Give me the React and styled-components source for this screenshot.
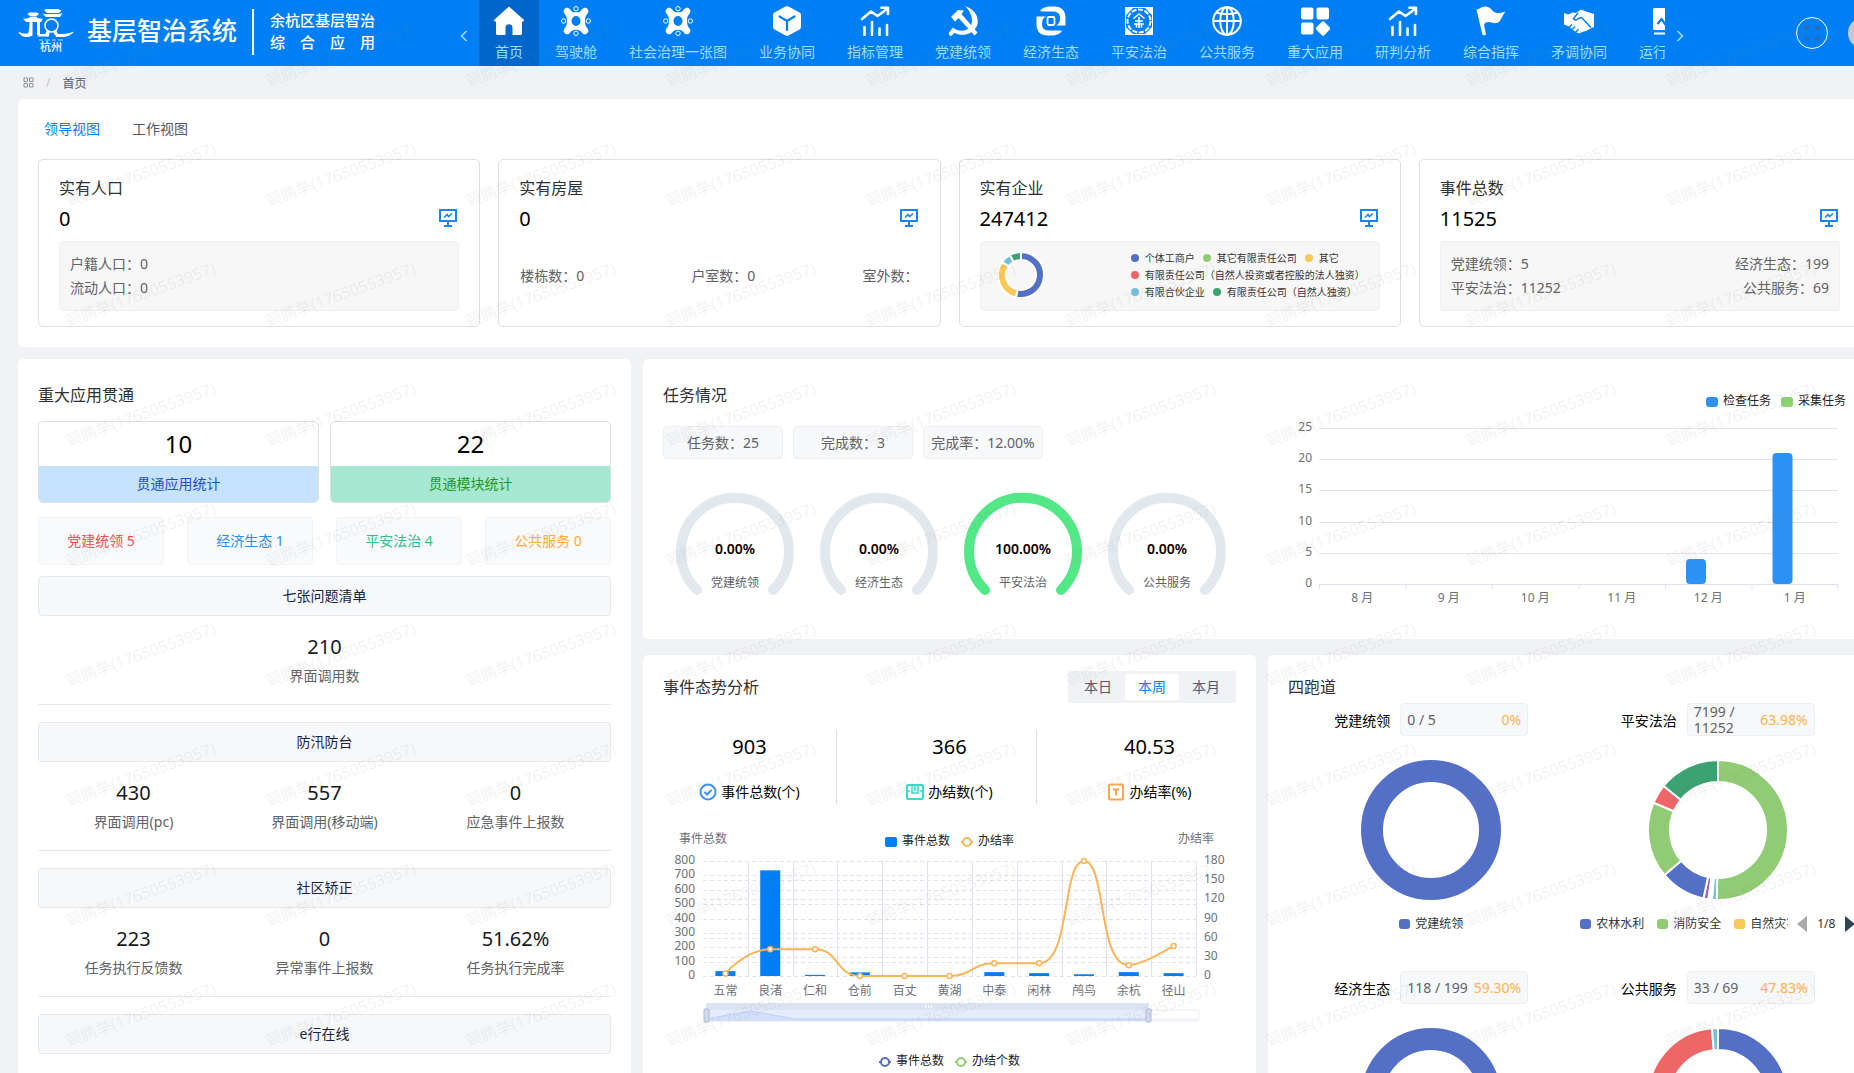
import React, { useState } from "react";
import styled, { createGlobalStyle } from "styled-components";

const navItems = [
  { icon: "home", label: "首页" },
  { icon: "gear", label: "驾驶舱" },
  { icon: "gear", label: "社会治理一张图" },
  { icon: "cube", label: "业务协同" },
  { icon: "trend", label: "指标管理" },
  { icon: "party", label: "党建统领" },
  { icon: "swirl", label: "经济生态" },
  { icon: "emblem", label: "平安法治" },
  { icon: "globe", label: "公共服务" },
  { icon: "apps", label: "重大应用" },
  { icon: "trend", label: "研判分析" },
  { icon: "flag", label: "综合指挥" },
  { icon: "shake", label: "矛调协同" },
  { icon: "board", label: "运行监测" },
];

const companyLegend = [
  ["#5470c6", "个体工商户"],
  ["#91cc75", "其它有限责任公司"],
  ["#fac858", "其它"],
  ["#ee6666", "有限责任公司（自然人投资或者控股的法人独资）"],
  ["#73c0de", "有限合伙企业"],
  ["#3ba272", "有限责任公司（自然人独资）"],
];

const appChips = [
  { label: "党建统领 5", color: "#f05050" },
  { label: "经济生态 1", color: "#2d8cf0" },
  { label: "平安法治 4", color: "#2fc08a" },
  { label: "公共服务 0", color: "#ffa940" },
];

const appSections = [
  { title: "七张问题清单", items: [["210", "界面调用数"]] },
  {
    title: "防汛防台",
    items: [
      ["430", "界面调用(pc)"],
      ["557", "界面调用(移动端)"],
      ["0", "应急事件上报数"],
    ],
  },
  {
    title: "社区矫正",
    items: [
      ["223", "任务执行反馈数"],
      ["0", "异常事件上报数"],
      ["51.62%", "任务执行完成率"],
    ],
  },
  { title: "e行在线", items: [] },
];

const gauges = [
  { value: 0, label: "党建统领" },
  { value: 0, label: "经济生态" },
  { value: 100, label: "平安法治" },
  { value: 0, label: "公共服务" },
];

const months = [
  ["8 月", 0],
  ["9 月", 0],
  ["10 月", 0],
  ["11 月", 0],
  ["12 月", 4],
  ["1 月", 21],
];

const towns = [
  ["五常", 34, 4],
  ["良渚", 735, 42],
  ["仁和", 8, 42],
  ["仓前", 25, 0],
  ["百丈", 0, 0],
  ["黄湖", 0, 0],
  ["中泰", 27, 20],
  ["闲林", 20, 20],
  ["鸬鸟", 12, 180],
  ["余杭", 27, 17],
  ["径山", 20, 47],
];

const lanes = [
  {
    name: "党建统领",
    count: "0 / 5",
    rate: "0%",
    slices: [[360, "#5470c6"]],
    legend: [["#5470c6", "党建统领"]],
  },
  {
    name: "平安法治",
    count: "7199 / 11252",
    rate: "63.98%",
    slices: [
      [181, "#91cc75"],
      [4, "#73c0de"],
      [3, "#ffffff"],
      [4, "#9a60b4"],
      [38, "#5470c6"],
      [63, "#91cc75"],
      [16, "#ee6666"],
      [51, "#3ba272"],
    ],
    legend: [
      ["#5470c6", "农林水利"],
      ["#91cc75", "消防安全"],
      ["#fac858", "自然灾害"],
    ],
    paged: true,
  },
  {
    name: "经济生态",
    count: "118 / 199",
    rate: "59.30%",
    slices: [[360, "#5470c6"]],
    legend: [["#5470c6", "经济生态"]],
  },
  {
    name: "公共服务",
    count: "33 / 69",
    rate: "47.83%",
    slices: [
      [172, "#5470c6"],
      [183, "#ee6666"],
      [5, "#73c0de"],
    ],
    legend: [["#5470c6", "公共服务"]],
  },
];

const NavIcon = ({ name }) => (
  <svg width="30" height="30" viewBox="0 0 30 30" fill="currentColor">
    {name === "home" && (
      <path d="M15 0.500L29.500 13.500C30.500 14.500 30 15.500 28.800 15.500H28V27C28 28.500 27.500 29 26 29H18.500V21.500C18.500 17 11.500 17 11.500 21.500V29H4C2.500 29 2 28.500 2 27V15.500H1.200C0 15.500 -0.500 14.500 0.500 13.500Z" />
    )}
    {name === "gear" && (
      <>
        <path
          fillRule="evenodd"
          d="M3.500 3C5 1 7.500 1.300 9 3.200C10.500 5.500 12 6.300 15 6.300C18 6.300 19.500 5.500 21 3.200C22.500 1.300 25 1 26.500 3C28 4.800 27.500 6.800 26 8.200C24.500 10 24 12 24 15C24 18 24.500 20 26 21.800C27.500 23.200 28 25.200 26.500 27C25 29 22.500 28.700 21 26.800C19.500 24.500 18 23.700 15 23.700C12 23.700 10.500 24.500 9 26.800C7.500 28.700 5 29 3.500 27C2 25.200 2.500 23.200 4 21.800C5.500 20 6 18 6 15C6 12 5.500 10 4 8.200C2.500 6.800 2 4.800 3.500 3ZM15 10A4.500 5 0 1 0 15 20A4.500 5 0 1 0 15 10Z"
        />
        <g fill="none" stroke="currentColor" strokeWidth="1">
          <circle cx="15" cy="2.700" r="2.200" />
          <circle cx="15" cy="27.300" r="2.200" />
          <circle cx="2.700" cy="15" r="2.200" />
          <circle cx="27.300" cy="15" r="2.200" />
        </g>
      </>
    )}
    {name === "cube" && (
      <>
        <path d="M13.500 0.500Q15 -0.200 16.500 0.500L27.500 6.500Q29 7.300 29 9V21Q29 22.700 27.500 23.500L16.500 29.500Q15 30.200 13.500 29.500L2.500 23.500Q1 22.700 1 21V9Q1 7.300 2.500 6.500Z" />
        <path
          d="M7.500 10.500L15 15L22.500 10.500M15 15V24"
          fill="none"
          stroke="#007ff5"
          strokeWidth="2.200"
          strokeLinecap="round"
        />
      </>
    )}
    {name === "trend" && (
      <g
        fill="none"
        stroke="currentColor"
        strokeWidth="2.600"
        strokeLinecap="round"
        strokeLinejoin="round"
      >
        <path d="M2 13L11 5.500L17.500 10L27 3M21.500 1.800H28V8" />
        <path d="M4.500 21V29M12 16V29M19.500 22.500V29M27 19V29" />
      </g>
    )}
    {name === "party" && (
      <>
        <path d="M17 0C26 3 31 10 29.500 18C27.500 26 19 30 11 28.500C9 28 7.500 27.500 6.500 26.800L4 29.500C2.500 30.500 0 28.500 1 26.500L5 21.500C10 26 18 26 22 21C26 15 24 7 17 0Z" />
        <path d="M3 11L10 4L16 4.500L13.500 8L29.500 26.500L26.500 29.500L10.500 12L7 15.500Z" />
      </>
    )}
    {name === "swirl" && (
      <>
        <path d="M4 5C8 0 13 0.500 18 0.500C26 0.500 29.500 5 29.500 12V19.500H20C23 18 24 16 24 12C24 7 21 5.500 16 5.500H9C7 5.500 5 5.500 4 5Z" />
        <path d="M26 25C22 30 17 29.500 12 29.500C4 29.500 0.500 25 0.500 18V10.500H10C7 12 6 14 6 18C6 23 9 24.500 14 24.500H21C23 24.500 25 24.500 26 25Z" />
        <path
          d="M11.500 12.500Q11.500 11 13 11H17Q18.500 11 18.500 12.500V17.500Q18.500 19 17 19H13Q11.500 19 11.500 17.500Z"
          fill="none"
          stroke="currentColor"
          strokeWidth="1.800"
        />
      </>
    )}
    {name === "emblem" && (
      <>
        <path d="M1 1H10L1 10ZM29 1V10L20 1ZM1 29V20L10 29ZM29 29H20L29 20Z" />
        <rect x="1.500" y="1.500" width="27" height="27" fill="none" stroke="currentColor" strokeWidth="1" />
        <circle cx="15" cy="15" r="11.500" fill="none" stroke="currentColor" strokeWidth="2" strokeDasharray="5 1.600" />
        <path
          d="M9.500 12.500L15 8L20.500 12.500M11 15H19M15 11V22M10 18H20M12.500 18V21.500M17.500 18V21.500"
          fill="none"
          stroke="currentColor"
          strokeWidth="1.600"
        />
      </>
    )}
    {name === "globe" && (
      <g fill="none" stroke="currentColor" strokeWidth="2">
        <circle cx="15" cy="15" r="13.800" />
        <ellipse cx="15" cy="15" rx="6.800" ry="13.800" />
        <path d="M15 1V29M1 15H29M4 6.500Q15 10 26 6.500" />
      </g>
    )}
    {name === "apps" && (
      <>
        <rect x="1" y="1.500" width="12.500" height="12" rx="2" />
        <rect x="16.500" y="1.500" width="12.500" height="12" rx="2" />
        <rect x="1" y="16.500" width="12.500" height="12" rx="2" />
        <path d="M22 15.500Q23 14.800 24 15.500L29.800 21.500Q30.500 22.500 29.800 23.500L24 29.500Q23 30.200 22 29.500L16.200 23.500Q15.500 22.500 16.200 21.500Z" />
      </>
    )}
    {name === "flag" && (
      <path d="M0.500 3.500C4 3 6 0 10 0.500C15 1 16 6 21 7C24 7.500 27 6.500 29.500 5.500C27 8 26 12 23.500 15.500C20 19 16 16 12.500 16C9.500 16 8.500 17.500 8 19L10 28.500Q8.500 29.800 6.500 29Z" />
    )}
    {name === "shake" && (
      <>
        <path d="M0 7L4 8.500L9 6.500L12 7L17 3.500L22 5.500L30 8V21L26.500 22.500L22 25L18 26L15.500 27.500L12.500 26.500L4 20L0 18.500Z" />
        <path
          d="M14 7L9.500 12.500Q11.500 15.500 14.500 12.500L17.500 11.500L27 21.500"
          fill="none"
          stroke="#007ff5"
          strokeWidth="1.500"
        />
        <path
          d="M4.500 22L8 18.500M7.500 24.500L11 20.500M11 27L14.500 23"
          stroke="#007ff5"
          strokeWidth="1.200"
        />
      </>
    )}
    {name === "board" && (
      <>
        <rect x="1" y="2" width="28" height="22" rx="1.500" />
        <path d="M5.500 18L9.500 13L13 18L17 11L21 16" fill="none" stroke="#007ff5" strokeWidth="2.200" />
        <rect x="2" y="26.500" width="26" height="2" />
      </>
    )}
  </svg>
);

const Logo = () => (
  <svg width="56" height="46" viewBox="0 0 56 46" fill="#fff">
    <path d="M26 1L28.500 0H40L43.500 1.500L41 4H29ZM24.500 4.500L27 5H41L44.500 4L42 8H28Z" />
    <path d="M11 3.500H19L21 5L18.500 7H12L9.500 5.500ZM5 9.500C9 10 11 9 13 7.500H18C20 9.500 22 10 25 9.500L23 13H8Z" />
    <path d="M11.500 12H14.500V26.500C12 28 9 28 9 28C10.500 24 11.500 20 11.500 12ZM19 12H22V26H19Z" />
    <circle cx="33.500" cy="16.500" r="6.500" fill="none" stroke="#fff" strokeWidth="1.500" />
    <path d="M29 21L27 26H31L32 22ZM38 21L40.500 26H36.500L35 22Z" />
    <path d="M0 22.500C4 25 8 24.500 11 24.500L9 28C4 28 2 26 0 22.500ZM22 25H31V27.500H19ZM37 25H44C49 25 52 24 56 22.500C53 26.500 49 28 43 28H38Z" />
    <path d="M21 31H25M27 31H32M34 31H38M40 31H45" stroke="#fff" strokeWidth="1" opacity="0.700" />
    <text x="22" y="42" fontSize="11" fontWeight="500">
      杭州
    </text>
  </svg>
);

const MonitorIcon = () => (
  <svg width="20" height="20" viewBox="0 0 20 20" fill="none" stroke="#1684fc" strokeWidth="2">
    <path d="M1 2H17V13H1ZM9 13V18M5 18H13" />
    <path d="M5 9.500L8 6.500L9.500 8.500L13 5.500" strokeWidth="1.600" />
  </svg>
);

const polar = (c, r, deg) => {
  const a = ((deg - 90) * Math.PI) / 180;
  return `${c + r * Math.cos(a)} ${c + r * Math.sin(a)}`;
};

const Donut = ({ size, hole, slices, gap }) => {
  const c = size / 2;
  if (slices.length === 1) {
    return (
      <svg width={size} height={size}>
        <circle cx={c} cy={c} r={(c + hole) / 2} fill="none" stroke={slices[0][1]} strokeWidth={c - hole} />
      </svg>
    );
  }
  let start = 0;
  return (
    <svg width={size} height={size}>
      {slices.map(([deg, color], i) => {
        const from = start;
        const to = start + deg;
        start = to;
        const large = deg > 180 ? 1 : 0;
        return (
          <path
            key={i}
            fill={color}
            stroke="#fff"
            strokeWidth={gap}
            d={`M${polar(c, c, from)}A${c} ${c} 0 ${large} 1 ${polar(c, c, to)}L${polar(c, hole, to)}A${hole} ${hole} 0 ${large} 0 ${polar(c, hole, from)}Z`}
          />
        );
      })}
    </svg>
  );
};

const Gauge = ({ value, label }) => (
  <svg width="144" height="136" textAnchor="middle">
    <path
      d="M34 107A54 54 0 1 1 110 107"
      fill="none"
      stroke={value ? "#52e787" : "#e1e8ee"}
      strokeWidth="10"
      strokeLinecap="round"
    />
    <text x="72" y="71" fontSize="14" fontWeight="600" fill="#000">
      {value.toFixed(2)}%
    </text>
    <text x="72" y="104" fontSize="12" fill="#606266">
      {label}
    </text>
  </svg>
);

const TaskChart = () => {
  const x0 = 57;
  const y0 = 205;
  const step = 86.5;
  const y = (v) => y0 - v * 6.24;
  return (
    <svg width="600" height="240" fontSize="12" fill="#6e7079">
      <rect x="444" y="18" width="12" height="10" rx="3" fill="#2d92f5" />
      <text x="461" y="26" fill="#222">检查任务</text>
      <rect x="519" y="18" width="12" height="10" rx="3" fill="#8bd46e" />
      <text x="536" y="26" fill="#222">采集任务</text>
      {[0, 5, 10, 15, 20, 25].map((v) => (
        <g key={v}>
          <path d={`M${x0} ${Math.round(y(v)) + 0.5}H${x0 + step * 6}`} stroke="#e0e3ee" />
          <text x="50" y={y(v) + 3} textAnchor="end">
            {v}
          </text>
        </g>
      ))}
      {months.map(([name, v], i) => (
        <g key={name}>
          <path d={`M${x0 + step * i + 0.5} ${y0}v5`} stroke="#e0e3ee" />
          {v > 0 && (
            <rect x={x0 + step * i + 21} y={y(v)} width="20" height={y0 - y(v)} rx="4" fill="#2d92f5" />
          )}
          <text x={x0 + step * (i + 0.5)} y="223" textAnchor="middle">
            {name}
          </text>
        </g>
      ))}
      <path d={`M${x0 + step * 6 - 0.5} ${y0}v5`} stroke="#e0e3ee" />
    </svg>
  );
};

const clamp = (v, a, b) => Math.max(Math.min(a, b), Math.min(Math.max(a, b), v));

// smooth line through the points, control points stay inside the neighbours' box
const smoothPath = (pts) => {
  const cps = pts.map((p, i) => {
    const prev = pts[i - 1];
    const next = pts[i + 1];
    if (!prev || !next) return [p, p];
    const lp = Math.hypot(p[0] - prev[0], p[1] - prev[1]);
    const ln = Math.hypot(p[0] - next[0], p[1] - next[1]);
    const r = ln / (lp + ln);
    const out = [0, 1].map((k) => clamp(p[k] + (next[k] - prev[k]) * 0.5 * r, p[k], next[k]));
    const inn = [0, 1].map((k) => clamp(p[k] - ((out[k] - p[k]) * lp) / ln, p[k], prev[k]));
    return [inn, [0, 1].map((k) => p[k] + ((p[k] - inn[k]) * ln) / lp)];
  });
  return pts
    .map((p, i) => (i === 0 ? `M${p}` : `C${cps[i - 1][1]} ${cps[i][0]} ${p}`))
    .join("");
};

const EventChart = () => {
  const x0 = 40;
  const y0 = 156;
  const h = 115;
  const step = 493 / 11;
  const pts = towns.map(([, , r], i) => [x0 + step * (i + 0.5), y0 - (r / 180) * h]);
  return (
    <svg width="573" height="262" fontSize="12" fill="#6e7079">
      <text x="40" y="23" textAnchor="middle">事件总数</text>
      <text x="533" y="23" textAnchor="middle">办结率</text>
      <rect x="222" y="17" width="12" height="10" rx="2" fill="#007ff5" />
      <text x="239" y="25" fill="#222">事件总数</text>
      <path d="M298 22h12" stroke="#f8b55a" strokeWidth="2" />
      <circle cx="304" cy="22" r="4" fill="#fff" stroke="#f8b55a" strokeWidth="2" />
      <text x="315" y="25" fill="#222">办结率</text>
      {[0, 1, 2, 3, 4, 5, 6, 7, 8].map((n) => {
        const y = y0 - (n / 8) * h;
        return (
          <g key={n}>
            <path d={`M${x0} ${Math.round(y) + 0.5}h493`} stroke="#e0e3ee" strokeDasharray="4 3" />
            <text x="32" y={y + 3} textAnchor="end">{n * 100}</text>
          </g>
        );
      })}
      {[0, 1, 2, 3, 4, 5, 6].map((n) => {
        const y = y0 - (n / 6) * h;
        return (
          <g key={n}>
            <path d={`M${x0} ${Math.round(y) + 0.5}h493`} stroke="#e0e3ee" strokeDasharray="4 3" />
            <text x="541" y={y + 3}>{n * 30}</text>
          </g>
        );
      })}
      {towns.map(([name, total], i) => (
        <g key={name}>
          <path d={`M${Math.round(x0 + step * (i + 1)) + 0.5} ${y0 - h}v${h}`} stroke="#e0e3ee" />
          <rect
            x={x0 + step * (i + 0.5) - 10}
            y={y0 - (total / 800) * h}
            width="20"
            height={(total / 800) * h}
            fill="#007ff5"
          />
          <text x={x0 + step * (i + 0.5)} y="175" textAnchor="middle">{name}</text>
        </g>
      ))}
      <path d={smoothPath(pts)} fill="none" stroke="#f8b55a" strokeWidth="2" />
      {pts.map(([x, y]) => (
        <circle key={x} cx={x} cy={y} r="2.500" fill="#fff" stroke="#f8b55a" strokeWidth="1.500" />
      ))}
      <rect x="43" y="190" width="493" height="11" rx="3" fill="#fff" stroke="#e6eaf5" />
      <path d="M43 199H536" stroke="#e6eaf5" />
      <rect x="43" y="183" width="443" height="7" fill="#dbe4f2" />
      <rect x="43" y="190" width="443" height="11" fill="#e5edfd" />
      <path d="M43 199L88 191L132 199H486V201H43Z" fill="#d3e0fb" />
      <path d="M43 199L88 191L132 199H486" fill="none" stroke="#bccff8" />
      <path d="M262.500 185v3M265.500 185v3M268.500 185v3" stroke="#fff" />
      <rect x="41" y="189" width="5" height="13" rx="1" fill="#d2dbee" stroke="#acb8d1" />
      <rect x="483" y="189" width="5" height="13" rx="1" fill="#d2dbee" stroke="#acb8d1" />
      <path d="M216 242h12" stroke="#5470c6" strokeWidth="2" />
      <circle cx="222" cy="242" r="4" fill="#fff" stroke="#5470c6" strokeWidth="2" />
      <text x="233" y="245" fill="#222">事件总数</text>
      <path d="M292 242h12" stroke="#91cc75" strokeWidth="2" />
      <circle cx="298" cy="242" r="4" fill="#fff" stroke="#91cc75" strokeWidth="2" />
      <text x="309" y="245" fill="#222">办结个数</text>
    </svg>
  );
};

const Watermark = () => (
  <WatermarkLayer aria-hidden="true">
    <defs>
      <pattern id="wm" x="60" y="10" width="200" height="120" patternUnits="userSpaceOnUse">
        <text x="8" y="77" fontSize="16" fill="#808080" fillOpacity="0.100" transform="rotate(-20 8 77)">
          顿鹏举(17650553957)
        </text>
      </pattern>
    </defs>
    <rect x="60" width="100%" height="100%" fill="url(#wm)" />
  </WatermarkLayer>
);

const App = () => {
  const [view, setView] = useState("领导视图");
  const [range, setRange] = useState("本周");

  return (
    <Page>
      <GlobalStyle />
      <Content>
        <Header>
          <Brand>
            <Logo />
            <BrandName>基层智治系统</BrandName>
            <BrandSub>
              <span>余杭区基层智治</span>
              <span>综　合　应　用</span>
            </BrandSub>
          </Brand>
          <ArrowButton aria-label="向左">
            <svg width="8" height="12" fill="none" stroke="currentColor" strokeWidth="1.500">
              <path d="M6.500 1L1.500 6L6.500 11" />
            </svg>
          </ArrowButton>
          <Nav>
            {navItems.map((item, i) => (
              <NavItem href="#" key={item.label} $active={i === 0}>
                <NavIcon name={item.icon} />
                <span>{item.label}</span>
              </NavItem>
            ))}
          </Nav>
          <ArrowButton aria-label="向右">
            <svg width="8" height="12" fill="none" stroke="currentColor" strokeWidth="1.500">
              <path d="M1.500 1L6.500 6L1.500 11" />
            </svg>
          </ArrowButton>
          <HeaderTools>
            <RoundButton aria-label="全屏">
              <svg width="14" height="14" fill="none" stroke="#4a5f7a" strokeWidth="1.500">
                <path d="M4 1H1V4M10 1H13V4M4 13H1V10M10 13H13V10" />
              </svg>
            </RoundButton>
            <Avatar />
          </HeaderTools>
        </Header>

        <Breadcrumb>
          <svg width="11" height="11" fill="none" stroke="#8c939d">
            <path d="M1 1H4.500V4.500H1ZM6.500 1H10V4.500H6.500ZM1 6.500H4.500V10H1ZM6.500 6.500H10V10H6.500Z" />
          </svg>
          <Slash>/</Slash>
          <span>首页</span>
        </Breadcrumb>

        <Main>
          <Overview>
            <Tabs>
              {["领导视图", "工作视图"].map((t) => (
                <Tab key={t} $active={view === t} onClick={() => setView(t)}>
                  {t}
                </Tab>
              ))}
            </Tabs>
            <CardRow>
              <Card>
                <CardTitle>实有人口</CardTitle>
                <CardNumber>
                  0 <MonitorIcon />
                </CardNumber>
                <CardBox>
                  <Lines>
                    <span>户籍人口：0</span>
                    <span>流动人口：0</span>
                  </Lines>
                </CardBox>
              </Card>
              <Card>
                <CardTitle>实有房屋</CardTitle>
                <CardNumber>
                  0 <MonitorIcon />
                </CardNumber>
                <CardBox $plain>
                  <span>楼栋数：0</span>
                  <span>户室数：0</span>
                  <span>室外数：</span>
                </CardBox>
              </Card>
              <Card>
                <CardTitle>实有企业</CardTitle>
                <CardNumber>
                  247412 <MonitorIcon />
                </CardNumber>
                <CardBox $chart>
                  <Donut
                    size={46}
                    hole={15}
                    gap={2}
                    slices={[
                      [193, "#5470c6"],
                      [112, "#fac858"],
                      [26, "#73c0de"],
                      [29, "#3ba272"],
                    ]}
                  />
                  <DotLegend>
                    {companyLegend.map(([color, text]) => (
                      <DotItem key={text} $color={color}>
                        {text}
                      </DotItem>
                    ))}
                  </DotLegend>
                </CardBox>
              </Card>
              <Card>
                <CardTitle>事件总数</CardTitle>
                <CardNumber>
                  11525 <MonitorIcon />
                </CardNumber>
                <CardBox>
                  <Lines>
                    <span>党建统领：5</span>
                    <span>平安法治：11252</span>
                  </Lines>
                  <Lines $end>
                    <span>经济生态：199</span>
                    <span>公共服务：69</span>
                  </Lines>
                </CardBox>
              </Card>
            </CardRow>
          </Overview>

          <Board>
            <AppPanel>
              <PanelTitle>重大应用贯通</PanelTitle>
              <Totals>
                <Total $bg="#c5e2ff" $color="#1e50c8">
                  <strong>10</strong>
                  <span>贯通应用统计</span>
                </Total>
                <Total $bg="#a6e8d1" $color="#1f9a1f">
                  <strong>22</strong>
                  <span>贯通模块统计</span>
                </Total>
              </Totals>
              <AppChips>
                {appChips.map((c) => (
                  <AppChip key={c.label} $color={c.color}>
                    {c.label}
                  </AppChip>
                ))}
              </AppChips>
              {appSections.map((s) => (
                <section key={s.title}>
                  <SectionBar>{s.title}</SectionBar>
                  <SectionStats>
                    {s.items.map(([value, label]) => (
                      <SectionStat key={label}>
                        <strong>{value}</strong>
                        <span>{label}</span>
                      </SectionStat>
                    ))}
                  </SectionStats>
                </section>
              ))}
            </AppPanel>

            <TaskPanel>
              <div>
                <PanelTitle>任务情况</PanelTitle>
                <TaskChips>
                  <TaskChip>任务数：25</TaskChip>
                  <TaskChip>完成数：3</TaskChip>
                  <TaskChip>完成率：12.00%</TaskChip>
                </TaskChips>
                <Gauges>
                  {gauges.map((g) => (
                    <Gauge key={g.label} {...g} />
                  ))}
                </Gauges>
              </div>
              <TaskChart />
            </TaskPanel>

            <EventPanel>
              <PanelHead>
                <PanelTitle>事件态势分析</PanelTitle>
                <Segmented>
                  {["本日", "本周", "本月"].map((r) => (
                    <Segment key={r} $active={range === r} onClick={() => setRange(r)}>
                      {r}
                    </Segment>
                  ))}
                </Segmented>
              </PanelHead>
              <EventStats>
                <EventStat>
                  <strong>903</strong>
                  <span>
                    <svg width="18" height="18" fill="none" stroke="#3d94f6" strokeWidth="2">
                      <circle cx="9" cy="9" r="7.500" />
                      <path d="M5.500 9L8 11.500L12.500 7" />
                    </svg>
                    事件总数(个)
                  </span>
                </EventStat>
                <EventStat>
                  <strong>366</strong>
                  <span>
                    <svg width="18" height="18" fill="none" stroke="#35dccb" strokeWidth="2">
                      <rect x="1" y="2" width="16" height="14" rx="1" />
                      <path d="M6 2V10H12V2M1 8H4M14 8H17M9 2V8" strokeWidth="1.500" />
                    </svg>
                    办结数(个)
                  </span>
                </EventStat>
                <EventStat>
                  <strong>40.53</strong>
                  <span>
                    <svg width="18" height="18" fill="none" stroke="#ffa550" strokeWidth="2">
                      <rect x="2" y="1.500" width="14" height="15" rx="1" />
                      <path d="M6 6.500H12M9 6.500V12.500" />
                    </svg>
                    办结率(%)
                  </span>
                </EventStat>
              </EventStats>
              <EventChart />
            </EventPanel>

            <LanePanel>
              <PanelHead>
                <PanelTitle>四跑道</PanelTitle>
              </PanelHead>
              <LaneGrid>
                {lanes.map((lane) => (
                  <Lane key={lane.name}>
                    <LaneHead>
                      {lane.name}
                      <LaneBox>
                        <span>{lane.count}</span>
                        <em>{lane.rate}</em>
                      </LaneBox>
                    </LaneHead>
                    <Donut size={140} hole={48} gap={2} slices={lane.slices} />
                    <LaneLegend>
                      <LegendItems $clip={lane.paged}>
                        {lane.legend.map(([color, text]) => (
                          <LegendItem key={text} $color={color}>
                            {text}
                          </LegendItem>
                        ))}
                      </LegendItems>
                      {lane.paged && (
                        <Pager>
                          <PageButton aria-label="上一页">
                            <svg width="10" height="16" fill="#aaa">
                              <path d="M10 0V16L0 8Z" />
                            </svg>
                          </PageButton>
                          1/8
                          <PageButton aria-label="下一页">
                            <svg width="10" height="16" fill="#2f4554">
                              <path d="M0 0V16L10 8Z" />
                            </svg>
                          </PageButton>
                        </Pager>
                      )}
                    </LaneLegend>
                  </Lane>
                ))}
              </LaneGrid>
            </LanePanel>
          </Board>
        </Main>
      </Content>
      <Watermark />
    </Page>
  );
};

const GlobalStyle = createGlobalStyle`
  * {
    box-sizing: border-box;
  }
  body {
    margin: 0;
    background: #f1f2f5;
    color: #303133;
    font-family: "Noto Sans", "Noto Sans CJK SC", sans-serif;
    font-size: 14px;
  }
  button {
    padding: 0;
    border: 0;
    background: none;
    color: inherit;
    font: inherit;
    cursor: pointer;
  }
  a {
    color: inherit;
    text-decoration: none;
  }
  svg {
    display: block;
    flex: none;
  }
  strong {
    font-weight: 400;
  }
`;

const Page = styled.div`
  height: 100vh;
  overflow: auto;
  scrollbar-width: none;
`;

const Content = styled.div`
  min-width: 1899px;
`;

const WatermarkLayer = styled.svg`
  position: fixed;
  inset: 0;
  width: 100%;
  height: 100%;
  pointer-events: none;
`;

const Header = styled.header`
  display: flex;
  align-items: center;
  height: 66px;
  background: #007ff5;
  color: #fff;
`;

const Brand = styled.div`
  display: flex;
  align-items: center;
  width: 449px;
  padding: 0 0 3px 18px;
`;

const BrandName = styled.h1`
  margin: 0 15px 0 13px;
  padding-bottom: 4px;
  font-size: 25px;
  font-weight: 500;
  line-height: 36px;
`;

const BrandSub = styled.div`
  display: flex;
  flex-direction: column;
  padding: 0 0 2px 16px;
  border-left: 2px solid #fff;
  font-size: 15px;
  font-weight: 500;
  line-height: 22px;
`;

const ArrowButton = styled.button`
  display: flex;
  align-items: center;
  justify-content: center;
  width: 30px;
  height: 66px;
  padding-top: 6px;
  color: #a6dcff;
`;

const Nav = styled.nav`
  display: flex;
  flex: 1;
  overflow: hidden;
`;

const NavItem = styled.a`
  display: flex;
  flex: none;
  flex-direction: column;
  align-items: center;
  height: 66px;
  padding: 6px 16px 0;
  background: ${({ $active }) => ($active ? "#0066cc" : "transparent")};

  svg {
    margin: 0 -2px;
  }
  span {
    margin-top: auto;
    color: #a0dcff;
    line-height: 28px;
  }
`;

const HeaderTools = styled.div`
  display: flex;
  gap: 20px;
  width: 204px;
  padding-right: 19px;
  justify-content: flex-end;
`;

const RoundButton = styled.button`
  display: flex;
  align-items: center;
  justify-content: center;
  width: 32px;
  height: 32px;
  border: 1px solid #fff;
  border-radius: 50%;
`;

const Avatar = styled.div`
  width: 32px;
  height: 32px;
  border-radius: 50%;
  background: #c4c8ce;
`;

const Breadcrumb = styled.div`
  display: flex;
  align-items: center;
  gap: 12px;
  height: 33px;
  padding-left: 23px;
  color: #515a6e;
  font-size: 12px;
`;

const Slash = styled.span`
  color: #c0c4cc;
`;

const Main = styled.main`
  padding: 0 18px 18px;
`;

const Panel = styled.section`
  border-radius: 5px;
  background: #fff;
`;

const Overview = styled(Panel)`
  padding: 0 20px 20px;
`;

const Tabs = styled.div`
  display: flex;
  gap: 32px;
  height: 60px;
  padding: 0 0 2px 6px;
`;

const Tab = styled.button`
  color: ${({ $active }) => ($active ? "#007ff5" : "#515a6e")};
`;

const CardRow = styled.div`
  display: grid;
  grid-template-columns: repeat(4, 1fr);
  gap: 18px;
`;

const Card = styled.article`
  padding: 16px 20px 15px;
  border: 1px solid #dcdfe3;
  border-radius: 5px;
`;

const CardTitle = styled.h3`
  margin: 0;
  font-size: 16px;
  font-weight: 400;
  line-height: 24px;
`;

const CardNumber = styled.div`
  display: flex;
  align-items: center;
  justify-content: space-between;
  height: 36px;
  margin-bottom: 5px;
  color: #000;
  font-size: 20px;
`;

const CardBox = styled.div`
  display: flex;
  align-items: center;
  justify-content: space-between;
  height: 70px;
  padding: ${({ $plain, $chart }) => ($plain ? "0 1px 2px" : $chart ? "0 12px 2px 17px" : "0 10px")};
  border: ${({ $plain }) => ($plain ? "0" : "1px solid #eeeff1")};
  border-radius: 4px;
  background: ${({ $plain }) => ($plain ? "none" : "#f7f7f7")};
  color: #606266;
`;

const Lines = styled.div`
  display: flex;
  flex-direction: column;
  align-items: ${({ $end }) => ($end ? "flex-end" : "flex-start")};
  line-height: 24px;
`;

const DotLegend = styled.div`
  display: flex;
  flex-wrap: wrap;
  column-gap: 8px;
  width: 236px;
  color: #333;
  font-size: 10px;
  line-height: 17px;
`;

const DotItem = styled.span`
  display: flex;
  align-items: center;
  gap: 6px;
  white-space: nowrap;

  &::before {
    content: "";
    width: 8px;
    height: 8px;
    border-radius: 50%;
    background: ${({ $color }) => $color};
  }
`;

const Board = styled.div`
  display: grid;
  grid-template-columns: repeat(3, 1fr);
  grid-template-rows: 280px auto;
  gap: 16px 12px;
  margin-top: 12px;
`;

const PanelTitle = styled.h2`
  margin: 0;
  font-size: 16px;
  font-weight: 400;
  line-height: 24px;
`;

const AppPanel = styled(Panel)`
  grid-row: span 2;
  padding: 24px 20px;
`;

const Totals = styled.div`
  display: grid;
  grid-template-columns: 1fr 1fr;
  gap: 11px;
  margin-top: 14px;
`;

const Total = styled.div`
  display: flex;
  flex-direction: column;
  overflow: hidden;
  border: 1px solid #dcdfe3;
  border-radius: 5px;
  text-align: center;

  strong {
    color: #000;
    font-size: 24px;
    line-height: 44px;
  }
  span {
    background: ${({ $bg }) => $bg};
    color: ${({ $color }) => $color};
    line-height: 36px;
  }
`;

const AppChips = styled.div`
  display: grid;
  grid-template-columns: repeat(4, 1fr);
  gap: 23px;
  margin: 14px 0 11px;
`;

const AppChip = styled.div`
  border: 1px solid #f2f3f5;
  border-radius: 4px;
  background: #f9fafc;
  color: ${({ $color }) => $color};
  line-height: 46px;
  text-align: center;
`;

const SectionBar = styled.h3`
  margin: 0;
  border: 1px solid #e6e8eb;
  border-radius: 4px;
  background: #f7f8fa;
  color: #17233d;
  font-size: 14px;
  font-weight: 400;
  line-height: 38px;
  text-align: center;
`;

const SectionStats = styled.div`
  display: flex;
  height: 89px;
  margin-bottom: 17px;
  padding-top: 15px;
  border-bottom: 1px solid #e6e8eb;
`;

const SectionStat = styled.div`
  display: flex;
  flex: 1;
  flex-direction: column;
  gap: 3px;
  text-align: center;

  strong {
    color: #17191d;
    font-size: 20px;
    line-height: 32px;
  }
  span {
    color: #606266;
    line-height: 20px;
  }
`;

const TaskPanel = styled(Panel)`
  display: flex;
  grid-column: span 2;
  align-items: flex-start;
  justify-content: space-between;
  padding: 20px 19px 20px 20px;

  > div {
    padding-top: 4px;
  }
`;

const TaskChips = styled.div`
  display: flex;
  gap: 10px;
  margin-top: 19px;
`;

const TaskChip = styled.div`
  width: 120px;
  border: 1px solid #eceef1;
  border-radius: 4px;
  background: #f7f8fa;
  color: #606266;
  line-height: 31px;
  text-align: center;
`;

const Gauges = styled.div`
  display: flex;
  margin-top: 24px;
`;

const EventPanel = styled(Panel)`
  padding: 16px 20px 180px;
`;

const PanelHead = styled.div`
  display: flex;
  align-items: center;
  justify-content: space-between;
  height: 32px;
`;

const Segmented = styled.div`
  display: flex;
  padding: 3px;
  border-radius: 2px;
  background: #f0f2f5;
`;

const Segment = styled.button`
  width: 54px;
  border-radius: 2px;
  background: ${({ $active }) => ($active ? "#fff" : "transparent")};
  color: ${({ $active }) => ($active ? "#007ff5" : "#515a6e")};
  line-height: 26px;
`;

const EventStats = styled.div`
  display: flex;
  margin: 27px 0 16px;
`;

const EventStat = styled.div`
  display: flex;
  flex: 1;
  flex-direction: column;
  align-items: center;
  gap: 16px;
  color: #000;

  & + & {
    padding-left: 26px;
    border-left: 1px solid #dcdfe6;
  }
  strong {
    font-size: 20px;
    line-height: 34px;
  }
  span {
    display: flex;
    align-items: center;
    gap: 4px;
    line-height: 24px;
  }
`;

const LanePanel = styled(Panel)`
  padding: 16px 20px;
`;

const LaneGrid = styled.div`
  display: grid;
  grid-template-columns: 1fr 1fr;
`;

const Lane = styled.div`
  display: flex;
  flex-direction: column;
  align-items: center;
  min-width: 0;
  height: 268px;
`;

const LaneHead = styled.div`
  display: flex;
  align-items: center;
  gap: 10px;
  margin-bottom: 24px;
  color: #000;
`;

const LaneBox = styled.div`
  display: flex;
  align-items: center;
  justify-content: space-between;
  width: 128px;
  height: 33px;
  padding: 0 6px;
  border: 1px solid #eceef1;
  border-radius: 4px;
  background: #f7f8fa;
  color: #606266;
  line-height: 16px;

  em {
    color: #ffb14a;
    font-style: normal;
  }
`;

const LaneLegend = styled.div`
  display: flex;
  align-items: center;
  gap: 9px;
  margin-top: 14px;
  color: #333;
  font-size: 12px;
  line-height: 20px;
`;

const LegendItems = styled.div`
  display: flex;
  gap: 13px;
  width: ${({ $clip }) => ($clip ? "208px" : "auto")};
  overflow: hidden;
`;

const LegendItem = styled.span`
  display: flex;
  flex: none;
  align-items: center;
  gap: 5px;

  &::before {
    content: "";
    width: 11px;
    height: 10px;
    border-radius: 3px;
    background: ${({ $color }) => $color};
  }
`;

const Pager = styled.div`
  display: flex;
  align-items: center;
  gap: 10px;
`;

const PageButton = styled.button`
  display: flex;
`;

export default App;
